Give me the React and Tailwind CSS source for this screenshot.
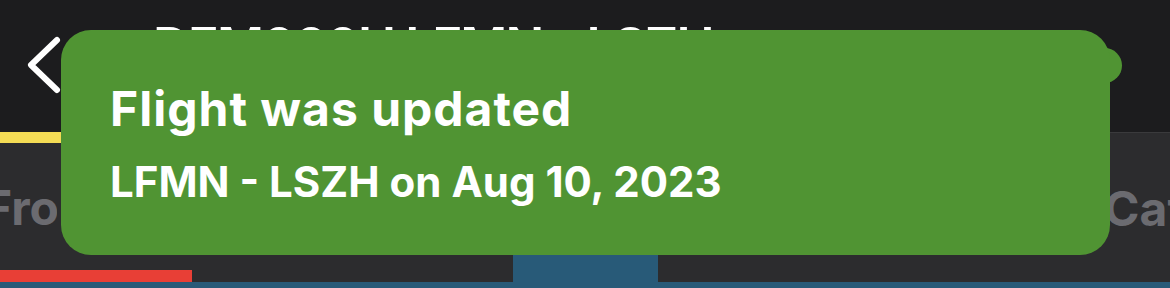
import React from "react";

export default function App() {
  return (
    <div
      className="relative w-[1170px] h-[288px] overflow-hidden bg-[#1c1c1e]"
      style={{ fontFamily: "Inter, 'Noto Sans', sans-serif" }}
    >
      {/* Header */}
      <div className="h-[132px] flex items-start">
        <svg width="70" height="132" viewBox="0 0 70 132" className="shrink-0">
          <path
            d="M57 40 L31 65 L57 90"
            fill="none"
            stroke="#ffffff"
            strokeWidth="6"
            strokeLinecap="round"
            strokeLinejoin="round"
          />
        </svg>
        <div className="ml-[83px] mt-[20px] text-[51px] leading-none font-semibold text-white whitespace-nowrap tracking-[-1.8px]">
          DEM000H LFMN - LSZH
        </div>
      </div>

      {/* Tab bar */}
      <div className="h-[150px] flex bg-[#2c2c2e]">
        <div className="w-[192px] flex flex-col shrink-0">
          <div className="h-[11px] bg-[#f4dc55]" />
          <div className="flex-1 pt-[41px]">
            <div className="w-[57px] overflow-hidden">
              <div className="text-[48px] leading-none font-bold text-[#6b6b70] whitespace-nowrap -ml-[16px]">
                From
              </div>
            </div>
          </div>
          <div className="h-[12px] bg-[#e83f36]" />
        </div>
        <div className="w-[321px] shrink-0 border-t border-[#3a3a3c]" />
        <div className="w-[145px] shrink-0 bg-[#285a78]" />
        <div className="flex-1 border-t border-[#3a3a3c] overflow-hidden">
          <div className="pt-[52px] pl-[446px] text-[48px] leading-none font-bold text-[#6b6b70] whitespace-nowrap">
            Category
          </div>
        </div>
      </div>
      <div className="h-[6px] bg-[#285a78]" />

      {/* Toast */}
      <div className="absolute left-[1087px] top-[48px] w-[35px] h-[35px] rounded-full bg-[#509433]" />
      <div className="absolute left-[61px] top-[30px] w-[1049px] h-[225px] rounded-[30px] bg-[#509433] pt-[55px] pl-[49px] text-white">
        <div className="text-[48px] leading-none font-bold tracking-[1px]">Flight was updated</div>
        <div className="mt-[28px] text-[42px] leading-none font-bold">
          LFMN - LSZH on Aug 10, 2023
        </div>
      </div>
    </div>
  );
}
